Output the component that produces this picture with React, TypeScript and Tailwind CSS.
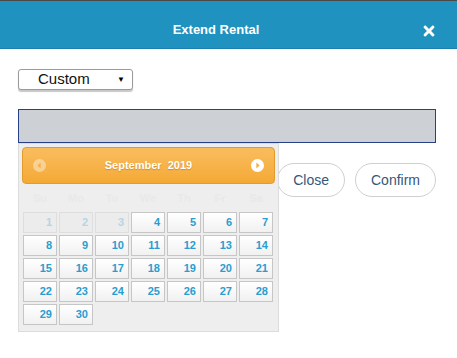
import React from 'react';
import { FaTimes } from 'react-icons/fa';

const WEEKDAYS = ['Su', 'Mo', 'Tu', 'We', 'Th', 'Fr', 'Sa'];
const DAYS = Array.from({ length: 30 }, (_, i) => i + 1);

const NavIcon: React.FC<{ dir: 'prev' | 'next' }> = ({ dir }) => (
  <svg width="13" height="13" viewBox="0 0 13 13" className={dir === 'prev' ? 'opacity-40' : ''}>
    <circle cx="6.5" cy="6.5" r="6.5" fill="#ffffff" />
    {dir === 'prev'
      ? <polygon points="7.6,3.6 4.4,6.5 7.6,9.4" fill="#f5ad3c" />
      : <polygon points="5.4,3.6 8.6,6.5 5.4,9.4" fill="#f5ad3c" />}
  </svg>
);

const DatePicker: React.FC = () => (
  <div className="absolute left-[18px] top-[143px] w-[261px] h-[189px] border border-[#dcdcdc] bg-[#eeeeee] p-[3px]">
    {/* Month header */}
    <div className="h-[37px] flex items-center justify-between px-[10px] rounded-[4px] border border-[#e39b2b] bg-gradient-to-b from-[#f9bd5e] to-[#f4a934]">
      <NavIcon dir="prev" />
      <span className="text-[11px] font-bold text-white [text-shadow:0_1px_1px_rgba(180,110,20,0.5)]">
        September&nbsp; 2019
      </span>
      <NavIcon dir="next" />
    </div>

    {/* Weekdays */}
    <div className="grid grid-cols-[repeat(7,34px)] gap-x-[2px] pl-[1px] h-[28px] items-center">
      {WEEKDAYS.map((d) => (
        <span key={d} className="text-center text-[11px] font-bold text-[#e9e9e9]">{d}</span>
      ))}
    </div>

    {/* Days */}
    <div className="grid grid-cols-[repeat(7,34px)] gap-[2px] pl-[1px]">
      {DAYS.map((d) => {
        const disabled = d < 4;
        return (
          <div
            key={d}
            className={
              disabled
                ? 'h-[21px] border border-[#dedede] bg-[#ececec] text-right pr-[4px] text-[11px] leading-[19px] font-bold text-[#b5d5e4]'
                : 'h-[21px] border border-[#c6c6c6] bg-gradient-to-b from-white to-[#f1f1f1] text-right pr-[4px] text-[11px] leading-[19px] font-bold text-[#2a9dd0]'
            }
          >
            {d}
          </div>
        );
      })}
    </div>
  </div>
);

export default function App() {
  return (
    <div className="w-[457px] h-[358px] bg-white relative overflow-hidden font-['Liberation_Sans',Arial,sans-serif]">
      {/* Header */}
      <div className="relative h-[49px] border-t border-[#4a4a4a] border-b border-b-[#1a80b0] bg-[#1f92bf] flex items-center pt-[10px] pr-[25px]">
        <h2 className="flex-1 text-center text-[13px] font-bold text-white">Extend Rental</h2>
        <FaTimes className="absolute right-[22px] top-[22px] text-white w-[12px] h-[16px]" />
      </div>

      <div className="pl-[18px] pr-[21px]">
        {/* Select */}
        <div className="mt-[20px] w-[115px] h-[21px] rounded-[3px] border border-[#9a9a9a] bg-white shadow-[0_2px_1px_rgba(0,0,0,0.22)] flex items-center pl-[19px] pr-[7px]">
          <span className="flex-1 text-[15px] text-[#111]">Custom</span>
          <span className="text-[8px] text-black">▼</span>
        </div>

        {/* Date input */}
        <div className="mt-[19px] h-[34px] border border-[#28408a] bg-[#cdd0d4]" />

        {/* Actions */}
        <div className="mt-[20px] flex justify-end gap-[10px]">
          <button className="h-[34px] px-[15px] rounded-full border border-[#cfcfcf] bg-white text-[14px] text-[#34587a]">
            Close
          </button>
          <button className="h-[34px] px-[15px] rounded-full border border-[#cfcfcf] bg-white text-[14px] text-[#34587a]">
            Confirm
          </button>
        </div>
      </div>

      <DatePicker />
    </div>
  );
}
